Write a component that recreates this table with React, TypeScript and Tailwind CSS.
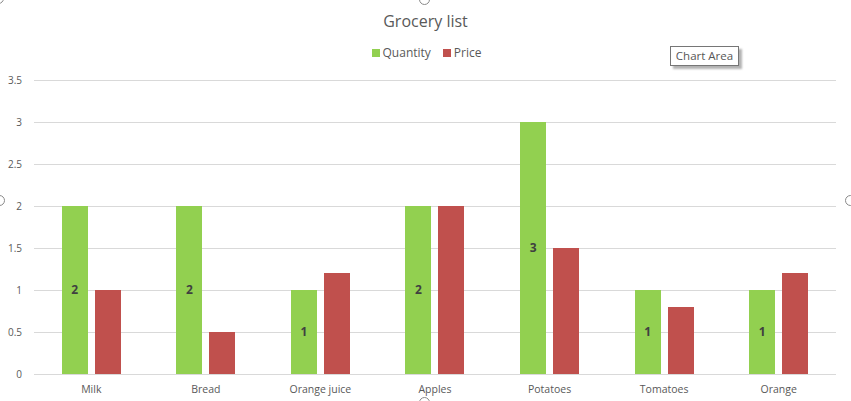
import React from "react";

type Row = { label: string; quantity: number; price: number };

const rows: Row[] = [
  { label: "Milk", quantity: 2, price: 1 },
  { label: "Bread", quantity: 2, price: 0.5 },
  { label: "Orange juice", quantity: 1, price: 1.2 },
  { label: "Apples", quantity: 2, price: 2 },
  { label: "Potatoes", quantity: 3, price: 1.5 },
  { label: "Tomatoes", quantity: 1, price: 0.8 },
  { label: "Orange", quantity: 1, price: 1.2 },
];

const ticks = ["3.5", "3", "2.5", "2", "1.5", "1", "0.5", "0"];

// 84px per unit on the value axis
const UNIT = 84;

function Handle({ className }: { className: string }) {
  return (
    <div
      className={`absolute w-[11px] h-[11px] rounded-full bg-white border border-[#8a8a8a] ${className}`}
    />
  );
}

export default function App() {
  return (
    <div
      className="relative w-[851px] h-[401px] bg-white overflow-hidden text-[#595959]"
      style={{ fontFamily: '"Open Sans", "Noto Sans", sans-serif' }}
    >
      {/* title */}
      <div className="pt-[10px] text-center text-[16px] leading-[22px]">Grocery list</div>

      {/* legend */}
      <div className="mt-[13px] flex justify-center items-center gap-[12px] text-[12px] leading-[16px] pl-[2px]">
        <div className="flex items-center gap-[3px]">
          <span className="w-[8px] h-[8px] bg-[#92d050]" />
          <span>Quantity</span>
        </div>
        <div className="flex items-center gap-[3px]">
          <span className="w-[8px] h-[8px] bg-[#c0504d]" />
          <span>Price</span>
        </div>
      </div>

      {/* plot */}
      <div className="mt-[19px] flex h-[295px]">
        <div className="w-[34px] h-[295px] -mt-[7px] flex flex-col">
          {ticks.map(t => (
            <div key={t} className="h-[42px] shrink-0 pr-[12px] text-right text-[10px] leading-[14px]">
              {t}
            </div>
          ))}
        </div>
        <div className="relative w-[802px] h-[295px]">
          <div className="flex flex-col">
            {ticks.slice(0, 7).map(t => (
              <div key={t} className="h-[42px] border-t border-[#d9d9d9]" />
            ))}
            <div className="border-t border-[#d9d9d9]" />
          </div>
          <div className="absolute left-0 right-0 top-0 h-[294px] grid grid-cols-7">
            {rows.map(r => (
              <div key={r.label} className="flex items-end justify-center gap-[7px]">
                <div
                  className="w-[26px] bg-[#92d050] flex items-center justify-center text-[12px] font-bold text-[#404040]"
                  style={{ height: r.quantity * UNIT }}
                >
                  {r.quantity}
                </div>
                <div className="w-[26px] bg-[#c0504d]" style={{ height: r.price * UNIT }} />
              </div>
            ))}
          </div>
        </div>
      </div>

      {/* category labels */}
      <div className="ml-[34px] w-[802px] mt-[7px] grid grid-cols-7 text-[10.5px] leading-[14px] text-center">
        {rows.map(r => (
          <div key={r.label}>{r.label}</div>
        ))}
      </div>

      {/* tooltip */}
      <div className="absolute left-[670px] top-[46px] w-[69px] h-[20px] border border-[#767676] bg-white text-[11.5px] leading-[18px] text-[#575757] text-center shadow-[3px_3px_2px_rgba(0,0,0,0.3)]">
        Chart Area
      </div>

      {/* selection handles */}
      <Handle className="-left-[7px] -top-[7px]" />
      <Handle className="left-[419px] -top-[6px]" />
      <Handle className="-left-[6px] top-[195px]" />
      <Handle className="left-[845px] top-[195px]" />
      <Handle className="left-[419px] top-[397px]" />
    </div>
  );
}
